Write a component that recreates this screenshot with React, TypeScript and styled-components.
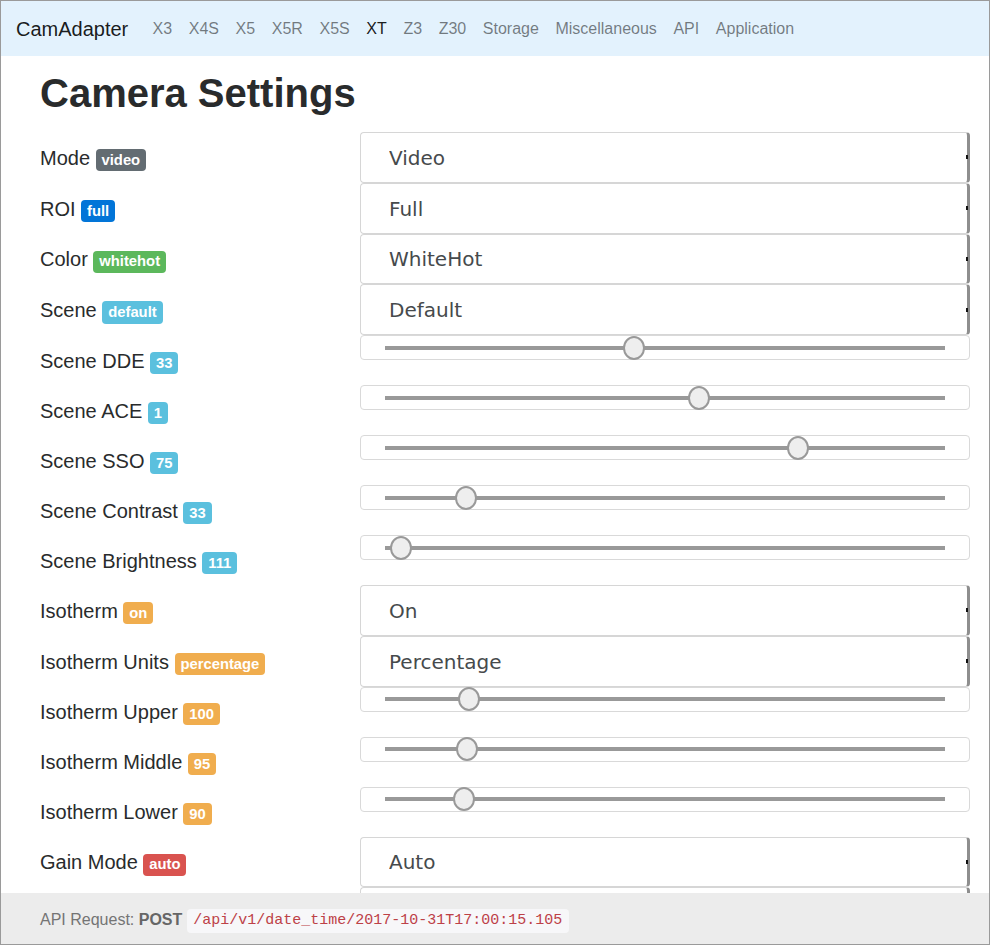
import React from "react";
import styled, { createGlobalStyle } from "styled-components";

const Global = createGlobalStyle`
  html, body { margin: 0; padding: 0; background: #fff; }
  body { font-family: "Liberation Sans", Arial, sans-serif; }
  * { box-sizing: border-box; }
`;

const Frame = styled.div`
  width: 990px;
  height: 945px;
  border: 1px solid #9a9a9a;
  display: flex;
  flex-direction: column;
  overflow: hidden;
  background: #fff;
`;

const Navbar = styled.nav`
  flex: 0 0 55px;
  display: flex;
  align-items: center;
  padding: 1px 15px 0;
  background: #e3f2fd;
`;

const Brand = styled.span`
  font-size: 20px;
  color: rgba(0, 0, 0, 0.9);
  margin-right: 16px;
`;

const NavList = styled.div`
  display: flex;
  align-items: center;
`;

const NavLink = styled.span<{ $active?: boolean }>`
  font-size: 16px;
  padding: 0 8.3px;
  color: ${(p) => (p.$active ? "rgba(0,0,0,0.9)" : "rgba(0,0,0,0.5)")};
`;

const Main = styled.main`
  flex: 1 1 auto;
  overflow: hidden;
  padding: 15px 0 0 39px;
`;

const Heading = styled.h1`
  font-size: 40px;
  font-weight: 700;
  line-height: 1.1;
  margin: 0 0 17px;
  color: #292b2c;
`;

const Form = styled.div`
  display: grid;
  grid-template-columns: 290px 610px;
  column-gap: 30px;
`;

const Label = styled.div`
  align-self: center;
  font-size: 20px;
  line-height: 1.5;
  color: #292b2c;
  white-space: nowrap;
  padding-top: 1px;
`;

const tones: Record<string, string> = {
  default: "#636c72",
  primary: "#0275d8",
  success: "#5cb85c",
  info: "#5bc0de",
  warning: "#f0ad4e",
  danger: "#d9534f",
};

const Badge = styled.span<{ $tone: string }>`
  display: inline-block;
  padding: 0.25em 0.4em;
  font-size: 74%;
  font-weight: 700;
  line-height: 1;
  color: #fff;
  border-radius: 0.25rem;
  vertical-align: baseline;
  background: ${(p) => tones[p.$tone]};
`;

const SelectBox = styled.div`
  position: relative;
  height: 50.75px;
  &::after {
    content: "";
    position: absolute;
    right: 2px;
    top: 50%;
    width: 2px;
    height: 4px;
    margin-top: -2px;
    background: #111;
  }
`;

const Select = styled.select`
  appearance: none;
  -webkit-appearance: none;
  width: 100%;
  height: 100%;
  margin: 0;
  padding: 1px 24px 0 28px;
  font-family: "DejaVu Sans", sans-serif;
  font-size: 20px;
  color: #464a4c;
  background: #fff;
  border: 1px solid #d6d6d6;
  border-right: 3px solid #8e8e8e;
  border-radius: 4px;
  outline: none;
`;

const SliderBox = styled.div`
  height: 25px;
  margin-bottom: 25px;
  border: 1px solid #d9d9d9;
  border-radius: 4px;
  padding: 0 24px;
  display: flex;
  align-items: center;
`;

const Range = styled.input`
  -webkit-appearance: none;
  appearance: none;
  width: 100%;
  height: 23px;
  margin: 0;
  background: transparent;
  outline: none;
  &::-webkit-slider-runnable-track {
    height: 4px;
    background: #999;
    border: none;
  }
  &::-webkit-slider-thumb {
    -webkit-appearance: none;
    box-sizing: border-box;
    width: 22px;
    height: 24px;
    margin-top: -10px;
    border-radius: 11px / 12px;
    background: #eee;
    border: 2px solid #999;
  }
`;

const Footer = styled.footer`
  flex: 0 0 51px;
  display: flex;
  align-items: center;
  padding: 4px 39px 0;
  background: #ececec;
`;

const FooterText = styled.span`
  font-size: 16px;
  line-height: 24px;
  color: #747474;
  white-space: nowrap;
`;

const Strong = styled.b`
  color: #666;
`;

const Code = styled.code`
  font-family: "Liberation Mono", "Courier New", monospace;
  font-size: 15px;
  padding: 0.2rem 0.4rem;
  color: #bd4147;
  background: #f7f7f9;
  border-radius: 0.25rem;
`;

type Row =
  | { label: string; badge: string; tone: string; kind: "select"; value: string; options: string[] }
  | { label: string; badge: string; tone: string; kind: "range"; pos: number };

const rows: Row[] = [
  { label: "Mode", badge: "video", tone: "default", kind: "select", value: "Video", options: ["Video", "Photo"] },
  { label: "ROI", badge: "full", tone: "primary", kind: "select", value: "Full", options: ["Full", "Custom"] },
  { label: "Color", badge: "whitehot", tone: "success", kind: "select", value: "WhiteHot", options: ["WhiteHot", "BlackHot"] },
  { label: "Scene", badge: "default", tone: "info", kind: "select", value: "Default", options: ["Default", "Outdoor"] },
  { label: "Scene DDE", badge: "33", tone: "info", kind: "range", pos: 442 },
  { label: "Scene ACE", badge: "1", tone: "info", kind: "range", pos: 563 },
  { label: "Scene SSO", badge: "75", tone: "info", kind: "range", pos: 747 },
  { label: "Scene Contrast", badge: "33", tone: "info", kind: "range", pos: 130 },
  { label: "Scene Brightness", badge: "111", tone: "info", kind: "range", pos: 9 },
  { label: "Isotherm", badge: "on", tone: "warning", kind: "select", value: "On", options: ["On", "Off"] },
  { label: "Isotherm Units", badge: "percentage", tone: "warning", kind: "select", value: "Percentage", options: ["Percentage", "Celsius"] },
  { label: "Isotherm Upper", badge: "100", tone: "warning", kind: "range", pos: 136 },
  { label: "Isotherm Middle", badge: "95", tone: "warning", kind: "range", pos: 132 },
  { label: "Isotherm Lower", badge: "90", tone: "warning", kind: "range", pos: 126 },
  { label: "Gain Mode", badge: "auto", tone: "danger", kind: "select", value: "Auto", options: ["Auto", "High", "Low"] },
  { label: "FFC Mode", badge: "auto", tone: "danger", kind: "select", value: "Auto", options: ["Auto", "Manual"] },
];

const navItems = ["X3", "X4S", "X5", "X5R", "X5S", "XT", "Z3", "Z30", "Storage", "Miscellaneous", "API", "Application"];

export default function App() {
  return (
    <>
      <Global />
      <Frame>
        <Navbar>
          <Brand>CamAdapter</Brand>
          <NavList>
            {navItems.map((n) => (
              <NavLink key={n} $active={n === "XT"}>
                {n}
              </NavLink>
            ))}
          </NavList>
        </Navbar>
        <Main>
          <Heading>Camera Settings</Heading>
          <Form>
            {rows.map((r) => (
              <React.Fragment key={r.label}>
                <Label>
                  {r.label} <Badge $tone={r.tone}>{r.badge}</Badge>
                </Label>
                {r.kind === "select" ? (
                  <SelectBox>
                    <Select defaultValue={r.value}>
                      {r.options.map((o) => (
                        <option key={o}>{o}</option>
                      ))}
                    </Select>
                  </SelectBox>
                ) : (
                  <SliderBox>
                    <Range type="range" min={0} max={1000} defaultValue={r.pos} />
                  </SliderBox>
                )}
              </React.Fragment>
            ))}
          </Form>
        </Main>
        <Footer>
          <FooterText>
            API Request: <Strong>POST</Strong> <Code>/api/v1/date_time/2017-10-31T17:00:15.105</Code>
          </FooterText>
        </Footer>
      </Frame>
    </>
  );
}
